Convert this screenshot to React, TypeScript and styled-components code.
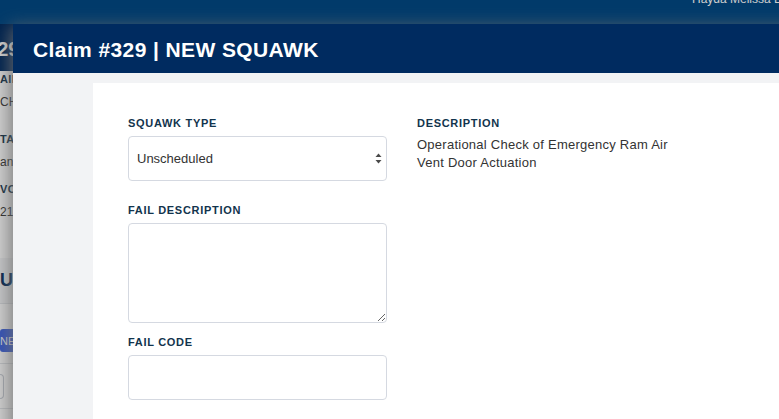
import styled, { createGlobalStyle } from "styled-components";

const GlobalStyle = createGlobalStyle`
  html, body {
    margin: 0;
    padding: 0;
    overflow: hidden;
  }
  body {
    font-family: "Liberation Sans", Arial, sans-serif;
    background: #fff;
  }
`;

const App = () => {
  return (
    <>
      <GlobalStyle />
      {/* page behind the modal */}
      <Page>
        <TopBar>
          <UserName>Hayda Melissa Bonilla</UserName>
        </TopBar>
        <PageHeader>
          <PageTitle>#329</PageTitle>
        </PageHeader>
        <InfoPanel>
          <InfoGroup $space={23}>
            <InfoLabel>AIRCRAFT</InfoLabel>
            <InfoValue>CHALLENGER 350</InfoValue>
          </InfoGroup>
          <InfoGroup $space={13}>
            <InfoLabel>TAIL</InfoLabel>
            <InfoValue>and</InfoValue>
          </InfoGroup>
          <InfoGroup $space={0}>
            <InfoLabel>VOID</InfoLabel>
            <InfoValue>2108</InfoValue>
          </InfoGroup>
        </InfoPanel>
        <SectionBar>
          <SectionTitle>UNITS</SectionTitle>
        </SectionBar>
        <Toolbar>
          <NewButton>NEW SQUAWK</NewButton>
        </Toolbar>
        <TableRow>
          <SearchBox />
        </TableRow>
      </Page>
      <Backdrop />

      <Modal>
        <ModalHeader>
          <ModalTitle>Claim #329 | NEW SQUAWK</ModalTitle>
        </ModalHeader>
        <ModalBody>
          <Card>
            <Column>
              <FieldGroup $space={23}>
                <Label>Squawk Type</Label>
                <SelectWrap>
                  <Select defaultValue="unscheduled">
                    <option value="unscheduled">Unscheduled</option>
                    <option value="scheduled">Scheduled</option>
                  </Select>
                  <SelectArrows width="7" height="11" viewBox="0 0 7 11">
                    <path d="M3.5 0.5 L6.5 4 L0.5 4 Z" fill="#4a4a4a" />
                    <path d="M3.5 10.5 L6.5 7 L0.5 7 Z" fill="#4a4a4a" />
                  </SelectArrows>
                </SelectWrap>
              </FieldGroup>
              <FieldGroup $space={13}>
                <Label>Fail Description</Label>
                <TextArea />
              </FieldGroup>
              <FieldGroup $space={0}>
                <Label>Fail Code</Label>
                <Input type="text" />
              </FieldGroup>
            </Column>
            <Column>
              <Label>Description</Label>
              <DescriptionText>
                Operational Check of Emergency Ram Air Vent Door Actuation
              </DescriptionText>
            </Column>
          </Card>
        </ModalBody>
      </Modal>
    </>
  );
};

export default App;

//Background page
const Page = styled.div`
  width: 779px;
  height: 419px;
  overflow: hidden;
  background: #fff;
  display: flex;
  flex-direction: column;
`;
const TopBar = styled.header`
  height: 24px;
  flex-shrink: 0;
  background: #024985;
  display: flex;
  align-items: flex-start;
  padding-left: 692px;
  overflow: hidden;
  white-space: nowrap;
`;
const UserName = styled.span`
  font-size: 12px;
  line-height: 14px;
  color: #fff;
  margin-top: -8px;
`;
const PageHeader = styled.div`
  height: 47px;
  flex-shrink: 0;
  background: #002b60;
  display: flex;
  align-items: center;
  padding-top: 4px;
  box-sizing: border-box;
`;
const PageTitle = styled.h1`
  margin: 0 0 0 -25px;
  font-size: 20px;
  font-weight: 700;
  color: #fff;
`;
const InfoPanel = styled.div`
  height: 187px;
  flex-shrink: 0;
  padding-top: 2px;
  box-sizing: border-box;
`;
const InfoGroup = styled.div<{ $space: number }>`
  margin-bottom: ${(p) => p.$space}px;
`;
const InfoLabel = styled.div`
  font-size: 11px;
  line-height: 13px;
  font-weight: 700;
  letter-spacing: 0.4px;
  color: #12344d;
  margin-bottom: 8px;
  white-space: nowrap;
`;
const InfoValue = styled.div`
  font-size: 12px;
  line-height: 16px;
  color: #333;
  white-space: nowrap;
`;
const SectionBar = styled.div`
  height: 46px;
  flex-shrink: 0;
  box-sizing: border-box;
  background: #f3f4f6;
  border-bottom: 1px solid #e1e4e8;
  display: flex;
  align-items: center;
`;
const SectionTitle = styled.h2`
  margin: 0;
  font-size: 18px;
  font-weight: 700;
  color: #002b60;
`;
const Toolbar = styled.div`
  height: 60px;
  flex-shrink: 0;
  box-sizing: border-box;
  padding-top: 25px;
  border-bottom: 1px solid #e1e4e8;
`;
const NewButton = styled.button`
  height: 23px;
  border: none;
  border-radius: 3px;
  padding: 0 10px 0 0;
  background: #3e64e1;
  color: #fff;
  font-family: "Liberation Sans", Arial, sans-serif;
  font-size: 11px;
  white-space: nowrap;
`;
const TableRow = styled.div`
  height: 45px;
  flex-shrink: 0;
  box-sizing: border-box;
  border-bottom: 1px solid #e1e4e8;
  display: flex;
  align-items: center;
`;
const SearchBox = styled.div`
  width: 4px;
  height: 25px;
  box-sizing: border-box;
  border: 1px solid #c9ced6;
  border-left: none;
  border-radius: 0 4px 4px 0;
`;
const Backdrop = styled.div`
  position: fixed;
  inset: 0;
  background: rgba(0, 0, 0, 0.2);
`;

//Modal
const Modal = styled.div`
  position: fixed;
  top: 24px;
  left: 13px;
  width: 900px;
  height: 520px;
  display: flex;
  flex-direction: column;
  box-shadow: -3px 3px 16px rgba(110, 110, 110, 0.85);
`;
const ModalHeader = styled.div`
  height: 49px;
  flex-shrink: 0;
  box-sizing: border-box;
  background: #002b60;
  padding: 3px 20px 0;
  display: flex;
  align-items: center;
`;
const ModalTitle = styled.h2`
  margin: 0;
  font-size: 21px;
  line-height: 24px;
  font-weight: 700;
  letter-spacing: 0.4px;
  color: #fff;
`;
const ModalBody = styled.div`
  flex: 1;
  background: #f2f3f5;
  padding: 10px 0 0 80px;
  display: flex;
`;
const Card = styled.div`
  flex: 1;
  background: #fff;
  padding: 34px 35px;
  display: grid;
  grid-template-columns: 259px 259px;
  column-gap: 30px;
  align-content: start;
  align-items: start;
`;
const Column = styled.div`
  display: flex;
  flex-direction: column;
`;
const FieldGroup = styled.div<{ $space: number }>`
  margin-bottom: ${(p) => p.$space}px;
`;
const Label = styled.label`
  display: block;
  font-size: 11px;
  line-height: 13px;
  font-weight: 700;
  letter-spacing: 0.7px;
  text-transform: uppercase;
  color: #12344d;
  margin-bottom: 6px;
`;
const SelectWrap = styled.div`
  position: relative;
`;
const Select = styled.select`
  display: block;
  width: 100%;
  height: 45px;
  margin: 0;
  box-sizing: border-box;
  appearance: none;
  border: 1px solid #d5d9e1;
  border-radius: 4px;
  padding: 0 20px 0 8px;
  background: #fff;
  font-family: "Liberation Sans", Arial, sans-serif;
  font-size: 13px;
  color: #333;
`;
const SelectArrows = styled.svg`
  position: absolute;
  right: 5px;
  top: 17px;
`;
const TextArea = styled.textarea`
  display: block;
  width: 100%;
  height: 100px;
  margin: 0;
  box-sizing: border-box;
  border: 1px solid #d5d9e1;
  border-radius: 4px;
  background: #fff;
  font-family: "Liberation Sans", Arial, sans-serif;
  font-size: 13px;
`;
const Input = styled.input`
  display: block;
  width: 100%;
  height: 45px;
  margin: 0;
  box-sizing: border-box;
  border: 1px solid #d5d9e1;
  border-radius: 4px;
  background: #fff;
  font-family: "Liberation Sans", Arial, sans-serif;
  font-size: 13px;
`;
const DescriptionText = styled.p`
  margin: 0;
  font-size: 13px;
  line-height: 18px;
  letter-spacing: 0.25px;
  color: #333;
`;
